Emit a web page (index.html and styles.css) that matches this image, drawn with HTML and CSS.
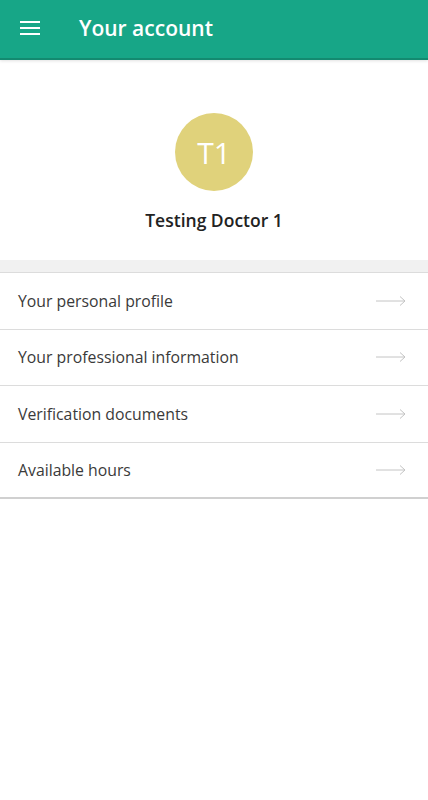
FILE: index.html
```html
<!DOCTYPE html>
<html>
<head>
<meta charset="utf-8">
<link rel="stylesheet" href="styles.css">
</head>
<body>
<header class="appbar">
  <button class="menu" aria-label="menu">
    <svg width="22" height="16" viewBox="0 0 22 16"><path d="M1 2h20M1 8h20M1 14h20" stroke="#fff" stroke-width="2"/></svg>
  </button>
  <h1 class="title">Your account</h1>
</header>
<section class="profile">
  <div class="avatar">T1</div>
  <div class="name">Testing Doctor 1</div>
</section>
<div class="spacer"></div>
<ul class="list">
  <li class="row"><span>Your personal profile</span><svg class="arrow" width="32" height="12" viewBox="0 0 32 12"><path d="M1 6h29M25 1.5l5 4.5-5 4.5" fill="none" stroke="#c4c4c4" stroke-width="1"/></svg></li>
  <li class="row"><span>Your professional information</span><svg class="arrow" width="32" height="12" viewBox="0 0 32 12"><path d="M1 6h29M25 1.5l5 4.5-5 4.5" fill="none" stroke="#c4c4c4" stroke-width="1"/></svg></li>
  <li class="row"><span>Verification documents</span><svg class="arrow" width="32" height="12" viewBox="0 0 32 12"><path d="M1 6h29M25 1.5l5 4.5-5 4.5" fill="none" stroke="#c4c4c4" stroke-width="1"/></svg></li>
  <li class="row"><span>Available hours</span><svg class="arrow" width="32" height="12" viewBox="0 0 32 12"><path d="M1 6h29M25 1.5l5 4.5-5 4.5" fill="none" stroke="#c4c4c4" stroke-width="1"/></svg></li>
</ul>
</body>
</html>
```
FILE: styles.css
```css
* { box-sizing: border-box; }
body {
  margin: 0;
  background: #fff;
  font-family: "Open Sans", "Noto Sans", sans-serif;
  color: #333;
}
.appbar {
  height: 60px;
  background: #17a687;
  border-bottom: 2px solid #138a70;
  box-shadow: 0 1px 3px rgba(0,0,0,0.12);
  display: flex;
  align-items: center;
  padding-left: 19px;
}
.menu {
  background: none;
  border: 0;
  padding: 0;
  width: 22px;
  height: 16px;
  display: flex;
  margin-top: -2px;
}
.title {
  margin: 0 0 0 38px;
  color: #fff;
  font-size: 21px;
  font-weight: 600;
  margin-top: -2px;
}
.profile {
  display: flex;
  flex-direction: column;
  align-items: center;
  padding-top: 53px;
  height: 200px;
}
.avatar {
  width: 78px;
  height: 78px;
  border-radius: 50%;
  background: #e0d27b;
  color: #fff;
  font-size: 30px;
  display: flex;
  align-items: center;
  justify-content: center;
}
.name {
  margin-top: 17px;
  font-size: 17.5px;
  font-weight: 600;
  color: #222;
}
.spacer {
  height: 12px;
  background: #f1f1f1;
}
.list {
  list-style: none;
  margin: 0;
  padding: 0;
  border-top: 1px solid #dcdcdc;
}
.row {
  height: 56.5px;
  display: flex;
  align-items: center;
  justify-content: space-between;
  padding: 0 21px 0 18px;
  border-bottom: 1px solid #dcdcdc;
  font-size: 15.8px;
  color: #3a3a3a;
}
.row:last-child { border-bottom: 2px solid #d0d0d0; }
.arrow { display: block; }
```
